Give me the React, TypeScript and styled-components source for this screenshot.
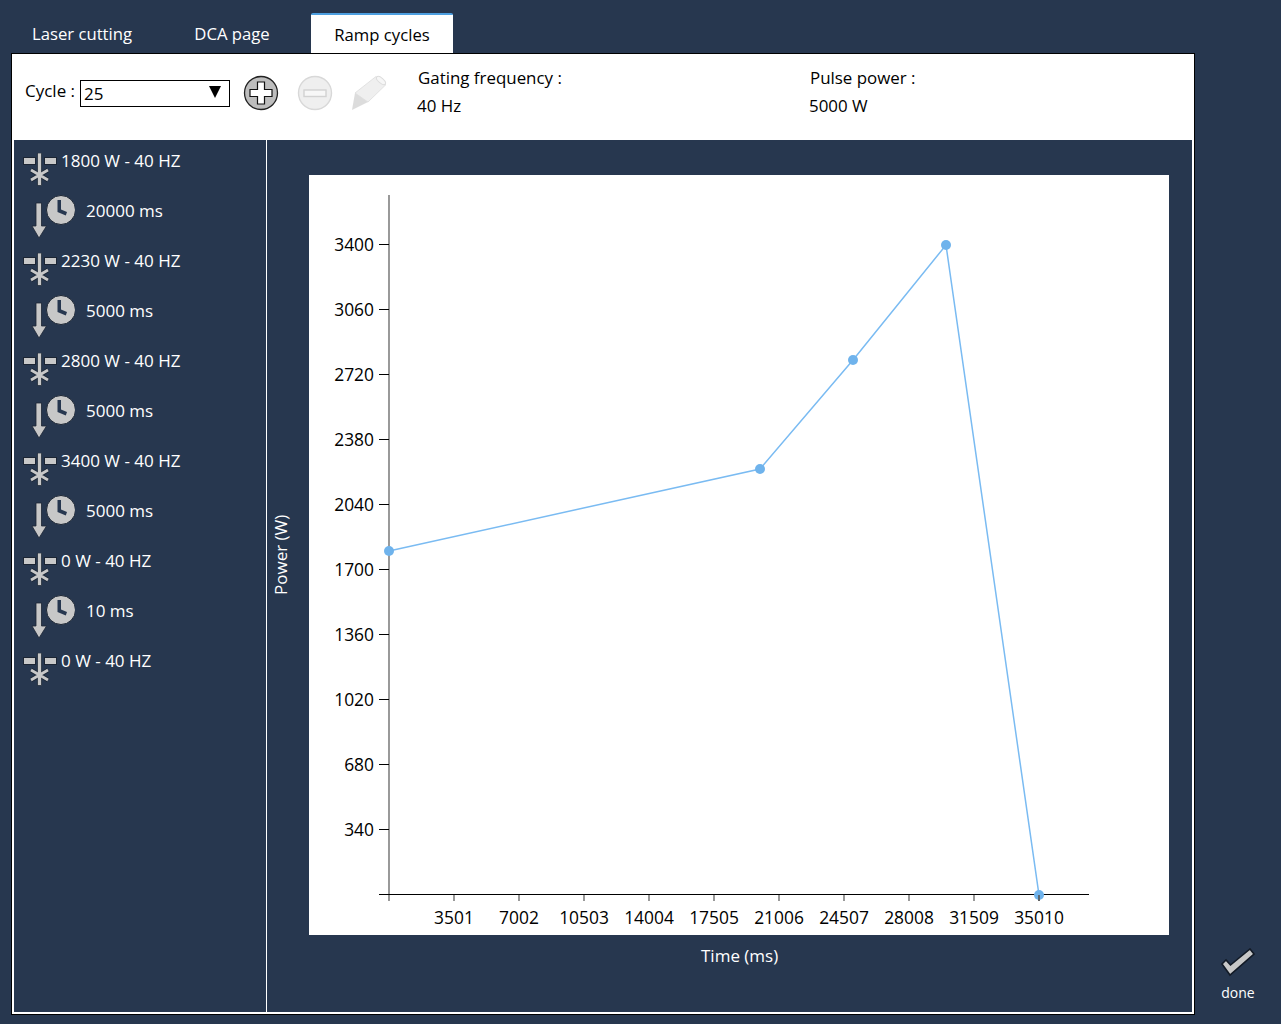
import React from "react";
import styled, { createGlobalStyle } from "styled-components";

const Global = createGlobalStyle`
  html, body { margin: 0; padding: 0; background: #27374f; }
  body { font-family: "Open Sans", "Liberation Sans", sans-serif; font-size: 17px; }
`;

const Page = styled.div`
  width: 1281px;
  height: 1024px;
  box-sizing: border-box;
  padding: 13px 0 0 11px;
  display: flex;
  overflow: hidden;
  background: #27374f;
`;
const MainColumn = styled.div`
  width: 1184px;
  display: flex;
  flex-direction: column;
`;
const TabBar = styled.div`
  display: flex;
  gap: 8px;
  height: 40px;
`;
const Tab = styled.div<{ $active?: boolean }>`
  width: 142px;
  box-sizing: border-box;
  height: 40px;
  display: flex;
  align-items: center;
  justify-content: center;
  font-size: 16.7px;
  padding-bottom: ${(p) => (p.$active ? "0" : "2px")};
  color: ${(p) => (p.$active ? "#000" : "#fff")};
  background: ${(p) => (p.$active ? "#fff" : "transparent")};
  border-top: 2px solid ${(p) => (p.$active ? "#4d9fe0" : "transparent")};
  border-radius: 2px 2px 0 0;
`;
const Panel = styled.div`
  height: 962px;
  box-sizing: border-box;
  background: #fff;
  border: 1px solid #000;
  padding: 0 2px 2px 2px;
  display: flex;
  flex-direction: column;
`;
const Header = styled.div`
  height: 86px;
  flex: none;
  display: flex;
  padding: 16px 0 0 11px;
  box-sizing: border-box;
`;
const CycleLabel = styled.span`
  font-size: 17px;
  line-height: 22px;
  margin-top: 10px;
  color: #000;
  width: 55px;
`;
const Select = styled.div`
  width: 150px;
  height: 27px;
  margin-top: 10px;
  box-sizing: border-box;
  border: 1px solid #000;
  padding: 0 8px 0 3px;
  display: flex;
  align-items: center;
  justify-content: space-between;
  font-size: 17px;
  color: #000;
`;
const SelectArrow = styled.span`
  width: 0;
  height: 0;
  margin: -3px 0 0;
  border-left: 6px solid transparent;
  border-right: 6px solid transparent;
  border-top: 12px solid #000;
`;
const IconRow = styled.div`
  display: flex;
  align-items: center;
  height: 46px;
  margin-left: 13px;
  gap: 18px;
`;
const InfoBlock = styled.div<{ $width: number; $offset?: number }>`
  width: ${(p) => p.$width}px;
  margin-left: ${(p) => p.$offset ?? 0}px;
  display: flex;
  flex-direction: column;
  color: #000;
  font-size: 16.9px;
  line-height: 22px;
  gap: 6px;
  margin-top: -3px;
`;
const InfoTitle = styled.span`
  padding-left: 1px;
`;
const Body = styled.div`
  flex: 1;
  display: flex;
  background: #27374f;
  min-height: 0;
`;
const Sidebar = styled.div`
  width: 252px;
  flex: none;
  border-right: 1px solid #fff;
  display: flex;
  flex-direction: column;
  padding-top: 10px;
`;
const StepRow = styled.div`
  height: 50px;
  display: flex;
  align-items: flex-start;
  color: #fff;
  font-size: 17px;
  line-height: 22px;
`;
const PowerText = styled.span`
  margin-left: 4px;
`;
const WaitText = styled.span`
  margin-left: 11px;
`;
const LaserSvg = styled.svg`
  flex: none;
  margin: 3px 0 0 9px;
`;
const WaitSvg = styled.svg`
  flex: none;
  margin: -7px 0 0 9px;
`;
const ChartArea = styled.div`
  flex: 1;
  display: grid;
  grid-template-columns: 42px 860px;
  grid-template-rows: 760px auto;
  padding-top: 35px;
`;
const YTitle = styled.div`
  writing-mode: vertical-rl;
  transform: rotate(180deg);
  display: flex;
  align-items: center;
  justify-content: center;
  color: #fff;
  font-size: 17px;
  height: 760px;
  width: 27px;
`;
const ChartCard = styled.svg`
  display: block;
  background: #fff;
  font-family: "Open Sans", "Liberation Sans", sans-serif;
  font-size: 17.4px;
`;
const XTitle = styled.div`
  grid-column: 2;
  color: #fff;
  font-size: 17px;
  line-height: 22px;
  padding: 10px 0 0 392px;
`;
const DoneColumn = styled.div`
  flex: 1;
  display: flex;
  flex-direction: column;
  align-items: center;
  justify-content: flex-end;
  padding: 0 0 21px 0;
  color: #fff;
  font-size: 14px;
  line-height: 20px;
  gap: 6px;
`;

const G = "#c8c8c8";
const D = "#1c2533";

const PlusIcon = () => (
  <svg width="36" height="36" viewBox="0 0 36 36">
    <circle cx="18" cy="18" r="16.5" fill="#bdbdbd" stroke="#222" strokeWidth="1.3" />
    <path d="M14.500 7h7v7.500H29v7h-7.500V29h-7v-7.500H7v-7h7.500z" fill="#fff" stroke="#111" strokeWidth="1.2" />
  </svg>
);
const MinusIcon = () => (
  <svg width="36" height="36" viewBox="0 0 36 36">
    <circle cx="18" cy="18" r="16.500" fill="#efefef" stroke="#d8d8d8" strokeWidth="1.4" />
    <rect x="7" y="15" width="22" height="6.500" fill="#f7f7f7" stroke="#d2d2d2" strokeWidth="1.4" />
  </svg>
);
const PencilIcon = () => (
  <svg width="36" height="36" viewBox="0 0 36 36">
    <path d="M4 18L25 1.500l10 8L17 27z" fill="#efefef" stroke="#e2e2e2" strokeWidth="1" />
    <path d="M4 18l13 9L1 35z" fill="#dcdcdc" />
    <ellipse cx="30" cy="5.500" rx="2.500" ry="5.500" transform="rotate(-50 30 5.500)" fill="#f6f6f6" stroke="#dcdcdc" />
  </svg>
);
const LaserIcon = () => (
  <LaserSvg width="34" height="34" viewBox="0 0 34 34">
    <rect x="0.500" y="4.500" width="12" height="7" fill={G} stroke={D} strokeWidth="1" />
    <rect x="21.500" y="4.500" width="12" height="7" fill={G} stroke={D} strokeWidth="1" />
    <path d="M8 17l17 10M25 17L8 27" stroke={D} strokeWidth="4.400" />
    <rect x="14.500" y="0" width="4" height="32.500" fill={G} stroke={D} strokeWidth="0.7" />
    <path d="M8 17l17 10M25 17L8 27" stroke={G} strokeWidth="2.800" />
  </LaserSvg>
);
const WaitIcon = () => (
  <WaitSvg width="52" height="48" viewBox="0 0 52 48">
    <path d="M13 10h5.500v23h5l-7.500 12-7-12h4z" fill={G} stroke={D} strokeWidth="0.8" />
    <circle cx="38" cy="17" r="14.500" fill={G} stroke={D} strokeWidth="1" />
    <path d="M34.500 7h3.500v9.500l6 2.500-1.200 3.500-8.300-3.500z" fill="#27374f" />
  </WaitSvg>
);

const Check = () => (
  <svg width="34" height="29" viewBox="0 0 34 29">
    <path d="M1 16l4-4 4.500 5L29 1l4 5L9 27z" fill="#c8c8c8" stroke="#121a26" strokeWidth="1.6" />
  </svg>
);

const steps: { power: string; wait?: string }[] = [
  { power: "1800 W - 40 HZ", wait: "20000 ms" },
  { power: "2230 W - 40 HZ", wait: "5000 ms" },
  { power: "2800 W - 40 HZ", wait: "5000 ms" },
  { power: "3400 W - 40 HZ", wait: "5000 ms" },
  { power: "0 W - 40 HZ", wait: "10 ms" },
  { power: "0 W - 40 HZ" },
];

const X0 = 80;
const Y0 = 720;
const xLabels = ["3501", "7002", "10503", "14004", "17505", "21006", "24507", "28008", "31509", "35010"];
const yLabels = ["340", "680", "1020", "1360", "1700", "2040", "2380", "2720", "3060", "3400"];
const points = [
  [80, 376],
  [451, 294],
  [544, 185],
  [637, 70],
  [730, 720],
];

const Chart = () => (
  <ChartCard width="860" height="760" viewBox="0 0 860 760">
    <line x1={X0} x2={X0} y1="20" y2="726" stroke="#808080" strokeWidth="1.6" />
    <line x1="70" x2="780" y1={Y0 - 0.5} y2={Y0 - 0.5} stroke="#000" strokeWidth="1" />
    {xLabels.map((l, i) => {
      const x = X0 + 65 * (i + 1);
      return (
        <g key={l}>
          <line x1={x} x2={x} y1={Y0} y2={Y0 + 6} stroke="#808080" strokeWidth="1.6" />
          <text x={x} y={Y0 + 29} textAnchor="middle" fill="#000">
            {l}
          </text>
        </g>
      );
    })}
    {yLabels.map((l, i) => {
      const y = Y0 - 65 * (i + 1);
      return (
        <g key={l}>
          <line x1="70" x2={X0} y1={y - 0.5} y2={y - 0.5} stroke="#000" />
          <text x="65" y={y + 6} textAnchor="end" fill="#000">
            {l}
          </text>
        </g>
      );
    })}
    <polyline points={points.map((p) => p.join(",")).join(" ")} fill="none" stroke="#7abbf2" strokeWidth="1.5" />
    {points.map((p) => (
      <circle key={p[0]} cx={p[0]} cy={p[1]} r="5" fill="#6fb3ec" />
    ))}
    <line x1={730} x2={730} y1={Y0} y2={Y0 + 6} stroke="#555" strokeWidth="1.6" />
  </ChartCard>
);

export default function App() {
  return (
    <Page>
      <Global />
      <MainColumn>
        <TabBar>
          <Tab>Laser cutting</Tab>
          <Tab>DCA page</Tab>
          <Tab $active>Ramp cycles</Tab>
        </TabBar>
        <Panel>
          <Header>
            <CycleLabel>Cycle :</CycleLabel>
            <Select>
              25
              <SelectArrow />
            </Select>
            <IconRow>
              <PlusIcon />
              <MinusIcon />
              <PencilIcon />
            </IconRow>
            <InfoBlock $width={392} $offset={30}>
              <InfoTitle>Gating frequency :</InfoTitle>
              <span>40 Hz</span>
            </InfoBlock>
            <InfoBlock $width={300}>
              <InfoTitle>Pulse power :</InfoTitle>
              <span>5000 W</span>
            </InfoBlock>
          </Header>
          <Body>
            <Sidebar>
              {steps.map((s, i) => (
                <React.Fragment key={i}>
                  <StepRow>
                    <LaserIcon />
                    <PowerText>{s.power}</PowerText>
                  </StepRow>
                  {s.wait && (
                    <StepRow>
                      <WaitIcon />
                      <WaitText>{s.wait}</WaitText>
                    </StepRow>
                  )}
                </React.Fragment>
              ))}
            </Sidebar>
            <ChartArea>
              <YTitle>Power (W)</YTitle>
              <Chart />
              <XTitle>Time (ms)</XTitle>
            </ChartArea>
          </Body>
        </Panel>
      </MainColumn>
      <DoneColumn>
        <Check />
        <span>done</span>
      </DoneColumn>
    </Page>
  );
}
